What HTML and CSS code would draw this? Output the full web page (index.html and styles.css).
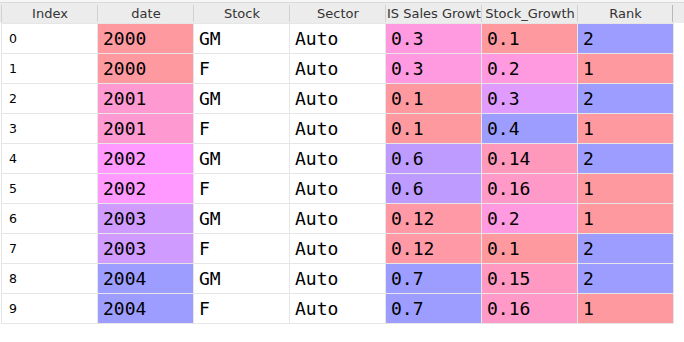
FILE: index.html
```html
<!DOCTYPE html>
<html>
<head>
<meta charset="utf-8">
<link rel="stylesheet" href="styles.css">
</head>
<body>
<div class="top-strip"></div>
<div class="head">
  <div class="hcell">Index</div>
  <div class="hcell">date</div>
  <div class="hcell">Stock</div>
  <div class="hcell">Sector</div>
  <div class="hcell">IS Sales Growth</div>
  <div class="hcell">Stock_Growth</div>
  <div class="hcell last">Rank</div>
</div>
<div class="grid">
  <div class="idx">0</div><div class="cell" style="background:#ff99a0">2000</div><div class="cell">GM</div><div class="cell">Auto</div><div class="cell" style="background:#ff99e0">0.3</div><div class="cell" style="background:#ff99a0">0.1</div><div class="cell" style="background:#9d9dff">2</div>
  <div class="idx">1</div><div class="cell" style="background:#ff99a0">2000</div><div class="cell">F</div><div class="cell">Auto</div><div class="cell" style="background:#ff99e0">0.3</div><div class="cell" style="background:#ff99e0">0.2</div><div class="cell" style="background:#ff99a0">1</div>
  <div class="idx">2</div><div class="cell" style="background:#ff99d2">2001</div><div class="cell">GM</div><div class="cell">Auto</div><div class="cell" style="background:#ff99a0">0.1</div><div class="cell" style="background:#e09bff">0.3</div><div class="cell" style="background:#9d9dff">2</div>
  <div class="idx">3</div><div class="cell" style="background:#ff99d2">2001</div><div class="cell">F</div><div class="cell">Auto</div><div class="cell" style="background:#ff99a0">0.1</div><div class="cell" style="background:#9d9dff">0.4</div><div class="cell" style="background:#ff99a0">1</div>
  <div class="idx">4</div><div class="cell" style="background:#ff99ff">2002</div><div class="cell">GM</div><div class="cell">Auto</div><div class="cell" style="background:#bd9bff">0.6</div><div class="cell" style="background:#ff99bc">0.14</div><div class="cell" style="background:#9d9dff">2</div>
  <div class="idx">5</div><div class="cell" style="background:#ff99ff">2002</div><div class="cell">F</div><div class="cell">Auto</div><div class="cell" style="background:#bd9bff">0.6</div><div class="cell" style="background:#ff99c8">0.16</div><div class="cell" style="background:#ff99a0">1</div>
  <div class="idx">6</div><div class="cell" style="background:#d09bff">2003</div><div class="cell">GM</div><div class="cell">Auto</div><div class="cell" style="background:#ff99a6">0.12</div><div class="cell" style="background:#ff99e0">0.2</div><div class="cell" style="background:#ff99a0">1</div>
  <div class="idx">7</div><div class="cell" style="background:#d09bff">2003</div><div class="cell">F</div><div class="cell">Auto</div><div class="cell" style="background:#ff99a6">0.12</div><div class="cell" style="background:#ff99a0">0.1</div><div class="cell" style="background:#9d9dff">2</div>
  <div class="idx">8</div><div class="cell" style="background:#9d9dff">2004</div><div class="cell">GM</div><div class="cell">Auto</div><div class="cell" style="background:#9d9dff">0.7</div><div class="cell" style="background:#ff99c2">0.15</div><div class="cell" style="background:#9d9dff">2</div>
  <div class="idx">9</div><div class="cell" style="background:#9d9dff">2004</div><div class="cell">F</div><div class="cell">Auto</div><div class="cell" style="background:#9d9dff">0.7</div><div class="cell" style="background:#ff99c8">0.16</div><div class="cell" style="background:#ff99a0">1</div>
</div>
</body>
</html>
```

FILE: styles.css
```css
html, body {
  margin: 0;
  padding: 0;
  background: #ffffff;
}
.top-strip {
  height: 2px;
  background: #f7f5f5;
}
.head {
  display: flex;
  align-items: center;
  width: 684px;
  height: 20px;
  background: #ececec;
  border-top: 1px solid #dadada;
  padding-left: 1px;
  box-sizing: content-box;
}
.hcell {
  box-sizing: border-box;
  width: 96px;
  flex: 0 0 96px;
  height: 17px;
  line-height: 17px;
  border-left: 1px solid #d2d2d2;
  padding-left: 1px;
  text-align: center;
  overflow: hidden;
  white-space: nowrap;
  font-family: "DejaVu Sans", sans-serif;
  font-size: 13px;
  color: #333333;
}
.hcell.last {
  border-right: 1px solid #b8b8b8;
}
.grid {
  display: grid;
  grid-template-columns: repeat(7, 95px);
  grid-auto-rows: 29px;
  gap: 1px;
  background: #e6e6e6;
  border: 1px solid #e6e6e6;
  margin-left: 1px;
  width: max-content;
}
.idx, .cell {
  background: #ffffff;
  display: flex;
  align-items: center;
  white-space: nowrap;
  overflow: hidden;
  color: #000000;
}
.idx {
  padding-left: 7px;
  font-family: "DejaVu Sans", sans-serif;
  font-size: 12.5px;
}
.cell {
  padding-left: 5px;
  font-family: "DejaVu Sans Mono", monospace;
  font-size: 18px;
}
```
